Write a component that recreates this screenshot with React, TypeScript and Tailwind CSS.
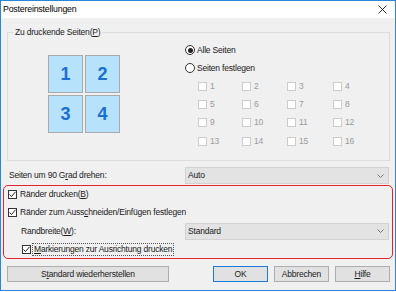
import React from "react";

const font = "font-['Liberation_Sans',Arial,sans-serif]";

function Check({ checked = false, disabled = false }: { checked?: boolean; disabled?: boolean }) {
  return (
    <span
      className={`w-[9px] h-[9px] shrink-0 border bg-white flex items-center justify-center ${
        disabled ? "border-[#cccccc]" : "border-[#333333]"
      }`}
    >
      {checked && (
        <svg width="7" height="7" viewBox="0 0 7 7">
          <path d="M0.5 3.5 L2.5 5.5 L6.5 0.8" fill="none" stroke="#222" strokeWidth="1" />
        </svg>
      )}
    </span>
  );
}

function Radio({ selected = false }: { selected?: boolean }) {
  return (
    <span className="w-[10px] h-[10px] shrink-0 rounded-full border border-[#333333] bg-white flex items-center justify-center">
      {selected && <span className="w-[5px] h-[5px] rounded-full bg-[#222222]" />}
    </span>
  );
}

function Select({ value }: { value: string }) {
  return (
    <div className="w-[204px] h-[17px] bg-[#e3e3e3] border border-[#d2d2d2] flex items-center justify-between pl-[2px] pr-[4px]">
      <span>{value}</span>
      <svg width="7" height="4" viewBox="0 0 7 4">
        <path d="M0.5 0.5 L3.5 3.5 L6.5 0.5" fill="none" stroke="#777" strokeWidth="1" />
      </svg>
    </div>
  );
}

function Button({ children, width, primary = false }: { children: React.ReactNode; width: string; primary?: boolean }) {
  return (
    <div
      className={`${width} h-[16px] bg-[#e1e1e1] flex items-center justify-center ${
        primary ? "border-[1.5px] border-[#1a7bd6]" : "border border-[#adadad]"
      }`}
    >
      {children}
    </div>
  );
}

const pages = [1, 2, 3, 4, 5, 6, 7, 8, 9, 10, 11, 12, 13, 14, 15, 16];

export default function App() {
  return (
    <div className={`w-[396px] h-[292px] bg-white ${font} text-[8.5px] tracking-[-0.2px] text-[#1a1a1a] leading-none`}>
      <div className="w-[396px] h-[291px] border border-[#2a86d6] bg-[#f0f0f0] flex flex-col">
        {/* title bar */}
        <div className="h-[17px] bg-white flex items-center justify-between pl-[2px] pr-[8px]">
          <span className="text-[8.8px] text-black">Postereinstellungen</span>
          <svg width="9" height="9" viewBox="0 0 9 9">
            <path d="M0.5 0.5 L8.5 8.5 M8.5 0.5 L0.5 8.5" stroke="#333" strokeWidth="1" />
          </svg>
        </div>

        {/* group box */}
        <div className="relative mt-[14px] ml-[6px] w-[383px] h-[129px] border border-[#dcdcdc] flex">
          <span className="absolute left-[5px] top-[-5px] px-[2px] bg-[#f0f0f0]">
            Zu druckende Seiten(<u>P</u>)
          </span>
          <div className="ml-[40px] mt-[22px] grid grid-cols-2 gap-[2px] self-start">
            {[1, 2, 3, 4].map((n) => (
              <div
                key={n}
                className="w-[35px] h-[38px] border border-[#a9a9a9] bg-[#b7e2fc] flex items-center justify-center text-[18px] tracking-normal font-bold text-[#1b6fd1]"
              >
                {n}
              </div>
            ))}
          </div>
          <div className="ml-[65px] mt-[8px] flex flex-col">
            <div className="h-[18px] flex items-center gap-[2px]">
              <Radio selected />
              <span>Alle Seiten</span>
            </div>
            <div className="h-[18px] flex items-center gap-[2px]">
              <Radio />
              <span>Seiten festlegen</span>
            </div>
            <div className="ml-[13px] grid grid-cols-[44px_45px_46px_45px] auto-rows-[18.3px]">
              {pages.map((p) => (
                <div key={p} className="flex items-center gap-[3px] text-[#9a9a9a]">
                  <Check disabled />
                  <span>{p}</span>
                </div>
              ))}
            </div>
          </div>
        </div>

        {/* rotate row */}
        <div className="mt-[6px] flex items-center">
          <span className="ml-[8px] w-[176px]">
            Seiten um 90 G<u>r</u>ad drehen:
          </span>
          <Select value="Auto" />
        </div>

        {/* highlighted area */}
        <div className="mt-[1px] ml-[2px] w-[390px] border border-[#e3232b] rounded-[5px] flex flex-col">
          <div className="h-[17px] pl-[4px] flex items-center gap-[3px]">
            <Check checked />
            <span>
              Ränder drucken(<u>B</u>)
            </span>
          </div>
          <div className="h-[18px] pl-[4px] flex items-center gap-[3px]">
            <Check checked />
            <span>
              Ränder zum Auss<u>c</u>hneiden/Einfügen festlegen
            </span>
          </div>
          <div className="h-[20px] flex items-center">
            <span className="ml-[17px] w-[164px]">
              Randbreite(<u>W</u>):
            </span>
            <Select value="Standard" />
          </div>
          <div className="h-[17px] pl-[18px] flex items-center gap-[1px]">
            <Check checked />
            <span className="border border-dotted border-[#555] px-[1px] py-[1px]">
              <u>M</u>arkierungen zur Ausrichtung drucken
            </span>
          </div>
        </div>

        {/* buttons */}
        <div className="mt-[7px] ml-[6px] flex">
          <Button width="w-[162px]">
            S<u>t</u>andard wiederherstellen
          </Button>
          <div className="ml-[44px] flex gap-[6px]">
            <Button width="w-[55px]" primary>
              OK
            </Button>
            <Button width="w-[55px]">Abbrechen</Button>
            <Button width="w-[55px]">
              <u>H</u>ilfe
            </Button>
          </div>
        </div>
      </div>
    </div>
  );
}
